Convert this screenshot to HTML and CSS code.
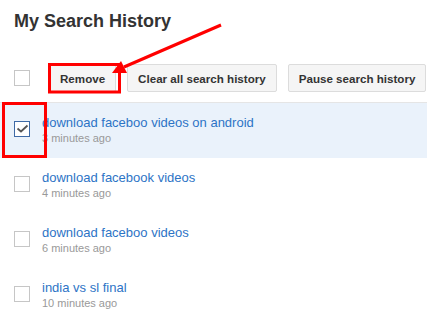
FILE: index.html
```html
<!DOCTYPE html>
<html>
  <head>
    <link rel="stylesheet" href="styles.css">
  </head>
  <body>
    <div class="page">
      <h1 class="title">My Search History</h1>

      <div class="toolbar">
        <span class="checkbox"></span>
        <div class="actions">
          <button class="btn">Remove</button>
          <button class="btn">Clear all search history</button>
          <button class="btn">Pause search history</button>
        </div>
      </div>

      <ul class="history">
        <li class="item selected">
          <span class="checkbox checked">
            <svg width="14" height="14" viewBox="0 0 14 14"><path d="M2.5 6.5 L6 9.5 L12.5 3.5" fill="none" stroke="#555" stroke-width="1.8"/></svg>
          </span>
          <div class="entry">
            <a class="query" href="#">download faceboo videos on android</a>
            <div class="time">3 minutes ago</div>
          </div>
        </li>
        <li class="item">
          <span class="checkbox"></span>
          <div class="entry">
            <a class="query" href="#">download facebook videos</a>
            <div class="time">4 minutes ago</div>
          </div>
        </li>
        <li class="item">
          <span class="checkbox"></span>
          <div class="entry">
            <a class="query" href="#">download faceboo videos</a>
            <div class="time">6 minutes ago</div>
          </div>
        </li>
        <li class="item">
          <span class="checkbox"></span>
          <div class="entry">
            <a class="query" href="#">india vs sl final</a>
            <div class="time">10 minutes ago</div>
          </div>
        </li>
      </ul>

      <!-- annotations drawn over the screenshot -->
      <svg class="marks" width="427" height="323" viewBox="0 0 427 323">
        <rect x="49.5" y="64.5" width="70" height="27.5" fill="none" stroke="#f00" stroke-width="3"/>
        <rect x="3.5" y="103.5" width="42" height="53" fill="none" stroke="#f00" stroke-width="3"/>
        <line x1="221" y1="25" x2="124" y2="67" stroke="#f00" stroke-width="3"/>
        <polygon points="112,73 121,61 127,73" fill="#f00"/>
      </svg>
    </div>
  </body>
</html>
```

FILE: styles.css
```css
body {
  margin: 0;
  background-color: #fff;
  font-family: "Liberation Sans", Arial, sans-serif;
  color: #333;
}

.page {
  position: relative;
  width: 427px;
  height: 323px;
  overflow: hidden;
}

.title {
  margin: 11px 0 0 14px;
  font-size: 18px;
  line-height: 20px;
  font-weight: bold;
  color: #333;
}

.toolbar {
  display: flex;
  align-items: center;
  margin-top: 33px;
  padding-left: 14px;
  height: 28px;
}

.checkbox {
  display: flex;
  align-items: center;
  justify-content: center;
  width: 14px;
  height: 14px;
  border: 1px solid #c6c6c6;
  background-color: #fff;
  flex-shrink: 0;
}

.checkbox.checked {
  border-color: #3e6aa6;
}

.actions {
  display: flex;
  gap: 11px;
  margin-left: 19px;
}

.btn {
  height: 28px;
  padding: 0 10px;
  border: 1px solid #dcdcdc;
  border-radius: 2px;
  background-color: #f5f5f5;
  color: #333;
  font-family: "Liberation Sans", Arial, sans-serif;
  font-size: 11.6px;
  font-weight: bold;
  white-space: nowrap;
}

.history {
  list-style: none;
  margin: 10px 0 0;
  padding: 0;
  border-top: 1px solid #e5e5e5;
}

.item {
  display: flex;
  align-items: flex-start;
  height: 55px;
  padding-left: 14px;
  box-sizing: border-box;
}

.item .checkbox {
  margin-top: 18px;
}

.item.selected {
  background-color: #eaf2fb;
}

.entry {
  margin-left: 12px;
  padding-top: 12px;
}

.query {
  display: block;
  font-size: 13px;
  line-height: 15px;
  color: #2d74c6;
  text-decoration: none;
}

.time {
  margin-top: 2px;
  font-size: 11px;
  line-height: 12px;
  color: #999;
}

.marks {
  position: absolute;
  left: 0;
  top: 0;
  pointer-events: none;
}
```
